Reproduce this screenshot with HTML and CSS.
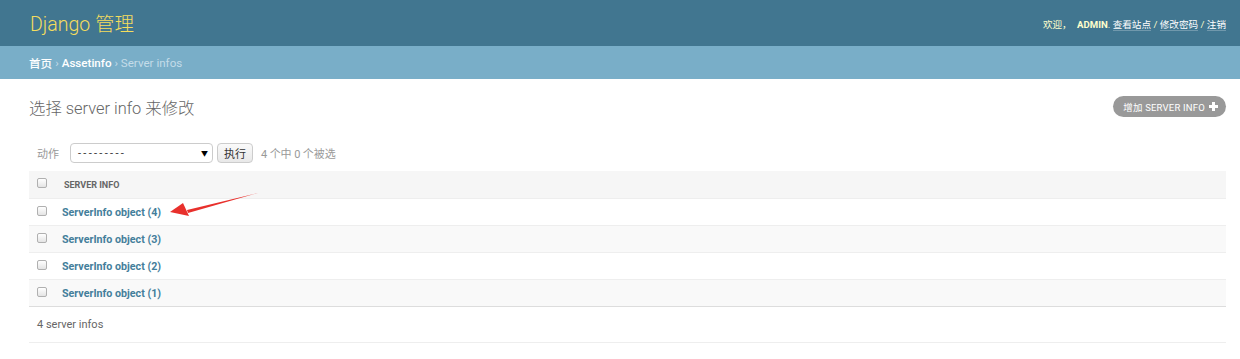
FILE: index.html
```html
<!DOCTYPE html>
<html lang="zh-CN">
<head>
<meta charset="utf-8">
<title>选择 server info 来修改 | Django 站点管理员</title>
<link rel="stylesheet" href="styles.css">
</head>
<body>
<div class="header">
  <div class="branding">Django 管理</div>
  <div class="user-tools">欢迎， <strong>admin</strong>. <a href="#">查看站点</a> / <a href="#">修改密码</a> / <a href="#">注销</a></div>
</div>
<div class="breadcrumbs"><a href="#">首页</a> › <a href="#">Assetinfo</a> › Server infos</div>
<div class="content">
  <div class="title-row">
    <h1>选择 server info 来修改</h1>
    <a class="addlink" href="#">增加 server info <span class="plus"></span></a>
  </div>
  <div class="actions">
    <span class="label">动作</span>
    <span class="select">---------<span class="caret">▼</span></span>
    <span class="button">执行</span>
    <span class="counter">4 个中 0 个被选</span>
  </div>
  <div class="results">
    <div class="row head"><span class="cb"></span><span class="col">Server info</span></div>
    <div class="row"><span class="cb"></span><a class="obj" href="#">ServerInfo object (4)</a></div>
    <div class="row alt"><span class="cb"></span><a class="obj" href="#">ServerInfo object (3)</a></div>
    <div class="row"><span class="cb"></span><a class="obj" href="#">ServerInfo object (2)</a></div>
    <div class="row alt last"><span class="cb"></span><a class="obj" href="#">ServerInfo object (1)</a></div>
    <div class="paginator">4 server infos</div>
  </div>
</div>
<svg class="arrow" width="100" height="30" viewBox="0 0 100 30">
  <path d="M88 2 L17 19 L18 22 Z" fill="#e8302c"/>
  <path d="M0 21 L13 12 L19 25 Z" fill="#e8302c"/>
</svg>
</body>
</html>
```
FILE: styles.css
```css
* { box-sizing: border-box; }
html, body { margin: 0; padding: 0; }
body {
  font-family: Roboto, "Noto Sans CJK SC", "Noto Sans", sans-serif;
  color: #333;
  background: #fff;
  position: relative;
}
a { text-decoration: none; }

.header {
  height: 46px;
  background: #417690;
  display: flex;
  justify-content: space-between;
  align-items: center;
  padding: 0 14px 0 30px;
}
.branding {
  color: #f5dd5d;
  font-size: 19.5px;
  font-weight: 300;
  margin-top: -1px;
}
.user-tools {
  color: #ffc;
  font-size: 9.6px;
  margin-top: 1px;
}
.user-tools strong {
  text-transform: uppercase;
  font-weight: 700;
  margin-left: 3px;
}
.user-tools a {
  color: #fff;
  border-bottom: 1px solid rgba(255,255,255,0.25);
}

.breadcrumbs {
  height: 33px;
  background: #79aec8;
  color: #c4dce8;
  font-size: 11.6px;
  padding: 0 29px;
  display: flex;
  align-items: center;
  gap: 3px;
}
.breadcrumbs a { color: #fff; font-weight: 500; }

.content { padding: 0 14px 0 29px; }
.title-row {
  display: flex;
  justify-content: space-between;
  align-items: center;
  margin-top: 17px;
  height: 21px;
}
h1 {
  margin: 0;
  font-size: 16.4px;
  font-weight: 300;
  color: #666;
}
.addlink {
  height: 21px;
  border-radius: 11px;
  background: #999;
  color: #fff;
  font-size: 9.5px;
  text-transform: uppercase;
  padding: 0 8px 0 10px;
  display: flex;
  align-items: center;
  gap: 4px;
  letter-spacing: 0.2px;
}
.plus {
  width: 9px; height: 9px;
  position: relative;
  display: inline-block;
}
.plus::before, .plus::after {
  content: "";
  position: absolute;
  background: #fff;
}
.plus::before { left: 3px; top: 0; width: 3px; height: 9px; }
.plus::after { left: 0; top: 3px; width: 9px; height: 3px; }

.actions {
  margin-top: 26px;
  height: 20px;
  display: flex;
  align-items: center;
  padding-left: 8px;
  font-size: 11px;
  color: #999;
}
.label { margin-right: 11px; }
.select {
  width: 143px;
  height: 20px;
  border: 1px solid #ccc;
  border-radius: 4px;
  color: #333;
  font-size: 11px;
  display: flex;
  align-items: center;
  justify-content: space-between;
  padding: 0 4px 0 7px;
  letter-spacing: 2.3px;
}
.caret { font-size: 7px; color: #000; letter-spacing: 0; }
.button {
  margin-left: 4px;
  height: 20px;
  width: 36px;
  border: 1px solid #ccc;
  border-radius: 4px;
  background: linear-gradient(#fafafa, #e8e8e8);
  color: #333;
  font-size: 11px;
  display: flex;
  align-items: center;
  justify-content: center;
}
.counter { margin-left: 8px; letter-spacing: -0.1px; }

.results { margin-top: 8px; }
.row {
  height: 27px;
  display: flex;
  align-items: center;
  padding-left: 8px;
  border-top: 1px solid #eee;
}
.row.head {
  background: #f6f6f6;
  border-top: none;
  border-bottom: none;
}
.row.alt { background: #f9f9f9; }
.row.last { border-bottom: 1px solid #ddd; height: 28px; }
.cb {
  width: 10px;
  height: 10px;
  border: 1px solid #b0b0b0;
  border-radius: 2px;
  background: linear-gradient(#fff, #e4e4e4);
  margin-top: -3px;
}
.col {
  margin-left: 17px;
  font-size: 9px;
  font-weight: 700;
  color: #666;
  text-transform: uppercase;
}
.obj {
  margin-left: 15px;
  font-size: 10.7px;
  font-weight: 700;
  color: #447e9b;
}
.paginator {
  height: 36px;
  display: flex;
  align-items: center;
  padding-left: 8px;
  font-size: 11px;
  color: #666;
  border-bottom: 1px solid #eee;
}

.arrow {
  position: absolute;
  left: 170px;
  top: 191px;
}
```
